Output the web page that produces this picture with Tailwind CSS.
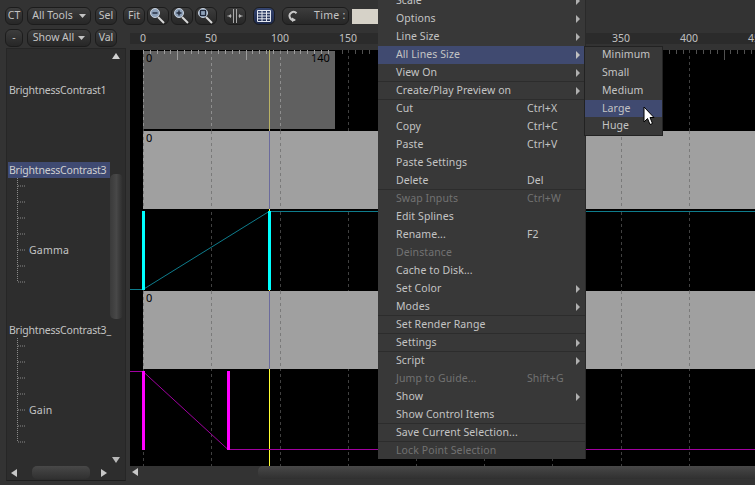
<!DOCTYPE html>
<html lang="en">
<head>
    <meta charset="UTF-8">
    <title>Timeline</title>
    <script src="https://cdn.jsdelivr.net/npm/@tailwindcss/browser@4"></script>
</head>
<body class="bg-[#333333]">
<div class="relative w-[755px] h-[485px] overflow-hidden bg-[#333333] text-[#c4c4c4] text-[10.5px] leading-none font-['Noto_Sans',sans-serif]">

    <!-- Top toolbar -->
    <div class="flex items-center h-[18px] mt-[7px] pl-[5px]">
        <div class="flex items-center justify-center w-[18px] h-[18px] pb-[1px] rounded-[6px] border border-[#1c1c1c] bg-linear-to-b from-[#3d3d3d] to-[#272727]">CT</div>
        <div class="flex items-center justify-center gap-[6px] ml-[4px] w-[64px] h-[18px] pb-[1px] rounded-[6px] border border-[#1c1c1c] bg-linear-to-b from-[#3d3d3d] to-[#272727]">All Tools
            <svg width="7" height="4" viewBox="0 0 7 4"><polygon points="0,0 7,0 3.5,4" fill="#c4c4c4"/></svg>
        </div>
        <div class="flex items-center justify-center ml-[4px] w-[22px] h-[18px] pb-[1px] rounded-[6px] border border-[#1c1c1c] bg-linear-to-b from-[#3d3d3d] to-[#272727]">Sel</div>
        <div class="flex items-center justify-center ml-[6px] w-[22px] h-[18px] pb-[1px] rounded-[6px] border border-[#1c1c1c] bg-linear-to-b from-[#3d3d3d] to-[#272727]">Fit</div>
        <div class="flex items-center justify-center ml-[2px] w-[22px] h-[18px] rounded-[6px] border border-[#1c1c1c] bg-linear-to-b from-[#3d3d3d] to-[#272727]">
            <svg width="20" height="16" viewBox="0 0 20 16"><line x1="10" y1="9" x2="16" y2="15" stroke="#d8d8d8" stroke-width="2"/><circle cx="7" cy="5" r="4.5" fill="#8da0b8" stroke="#c8d0dc"/><line x1="4.5" y1="5" x2="9.5" y2="5" stroke="#20283a" stroke-width="1.4"/></svg>
        </div>
        <div class="flex items-center justify-center ml-[2px] w-[22px] h-[18px] rounded-[6px] border border-[#1c1c1c] bg-linear-to-b from-[#3d3d3d] to-[#272727]">
            <svg width="20" height="16" viewBox="0 0 20 16"><line x1="10" y1="9" x2="16" y2="15" stroke="#d8d8d8" stroke-width="2"/><circle cx="7" cy="5" r="4.5" fill="#8da0b8" stroke="#c8d0dc"/><path d="M4.5 5H9.5M7 2.5V7.5" stroke="#20283a" stroke-width="1.4"/></svg>
        </div>
        <div class="flex items-center justify-center ml-[2px] w-[22px] h-[18px] rounded-[6px] border border-[#1c1c1c] bg-linear-to-b from-[#3d3d3d] to-[#272727]">
            <svg width="20" height="16" viewBox="0 0 20 16"><line x1="10" y1="9" x2="16" y2="15" stroke="#d8d8d8" stroke-width="2"/><circle cx="7" cy="5" r="4.5" fill="#8da0b8" stroke="#c8d0dc"/><rect x="4.5" y="2.5" width="5" height="5" fill="none" stroke="#20283a" stroke-width="1.2"/></svg>
        </div>
        <div class="flex items-center justify-center ml-[7px] w-[22px] h-[18px] rounded-[6px] border border-[#1c1c1c] bg-linear-to-b from-[#3d3d3d] to-[#272727]">
            <svg width="18" height="14" viewBox="0 0 18 14"><path d="M7.5 0V14M10.5 0V14" stroke="#a8a8a8"/><path d="M1 7H6M12 7H17" stroke="#777777"/><polygon points="2,7 5,5 5,9" fill="#b0b0b0"/><polygon points="16,7 13,5 13,9" fill="#b0b0b0"/></svg>
        </div>
        <div class="flex items-center justify-center ml-[7px] w-[22px] h-[18px] rounded-[6px] border border-[#1c1c1c] bg-linear-to-b from-[#34446f] to-[#1f2b4e]">
            <svg width="14" height="12" viewBox="0 0 14 12"><path d="M.5 .5H13.5V11.5H.5ZM.5 3.2H13.5M.5 6H13.5M.5 8.8H13.5M5 .5V11.5M9.5 .5V11.5" fill="none" stroke="#e4e8f0"/></svg>
        </div>
        <div class="flex items-center ml-[7px] w-[67px] h-[18px] rounded-[6px] border border-[#1c1c1c] bg-linear-to-b from-[#3d3d3d] to-[#272727]">
            <svg class="ml-[4px]" width="12" height="12" viewBox="0 0 12 12"><path d="M9.5 3.2A4 4 0 1 0 7.5 9.8" fill="none" stroke="#c8c8c8" stroke-width="2"/><polygon points="5,7.5 9,10 5,12" fill="#c8c8c8"/></svg>
            <span class="ml-[15px] mb-[1px] tracking-[0.3px]">Time :</span>
        </div>
        <div class="ml-[3px] w-[26px] h-[15px] bg-[#d6d2c8]"></div>
    </div>

    <div class="flex mt-[4px]">
        <!-- Left column: second toolbar row and the tool list -->
        <div class="w-[130px] shrink-0">
            <div class="flex items-center h-[18px] pl-[5px]">
                <div class="flex items-center justify-center w-[18px] h-[18px] pb-[1px] rounded-[6px] border border-[#1c1c1c] bg-linear-to-b from-[#3d3d3d] to-[#272727]">-</div>
                <div class="flex items-center justify-center gap-[4px] ml-[4px] w-[64px] h-[18px] pb-[1px] rounded-[6px] border border-[#1c1c1c] bg-linear-to-b from-[#3d3d3d] to-[#272727]">Show All
                    <svg width="7" height="4" viewBox="0 0 7 4"><polygon points="0,0 7,0 3.5,4" fill="#c4c4c4"/></svg>
                </div>
                <div class="flex items-center justify-center ml-[4px] w-[22px] h-[18px] pb-[1px] rounded-[6px] border border-[#1c1c1c] bg-linear-to-b from-[#3d3d3d] to-[#272727]">Val</div>
            </div>

            <div class="relative ml-[6px] mt-[1px] w-[120px] h-[433px] bg-[#2d2d2d] border border-[#262626] border-b-[#1e1e1e]">
                <div class="flex flex-col pt-[1px] tracking-[-0.2px]">
                    <div class="flex items-center h-[80px] pl-[2px]">BrightnessContrast1</div>
                    <div class="flex items-center h-[80px] pl-[1px]"><span class="flex items-center w-[102px] h-[16px] pl-[1px] bg-[#3f4a72] text-[#d0d0d0]">BrightnessContrast3</span></div>
                    <div class="flex items-center h-[80px] pl-[22px] tracking-[0.2px]">Gamma</div>
                    <div class="flex items-center h-[80px] pl-[2px] whitespace-nowrap">BrightnessContrast3_</div>
                    <div class="flex items-center h-[80px] pl-[22px] tracking-[0.2px]">Gain</div>
                </div>

                <!-- tree branches -->
                <svg class="absolute left-0 top-0" width="118" height="431" viewBox="7 49 118 431">
                    <g fill="none" stroke="#8a8a8a" stroke-dasharray="1 1">
                        <path d="M17.500 178V282M18 186H26M18 202H26M18 218H26M18 234H26M18 250H26M18 266H26M18 282H26"/>
                        <path d="M17.500 338V442M18 346H26M18 362H26M18 378H26M18 394H26M18 410H26M18 426H26M18 442H26"/>
                    </g>
                </svg>

                <!-- list scrollbars -->
                <svg class="absolute right-[5px] top-[4px]" width="8" height="6" viewBox="0 0 8 6"><polygon points="4,0 8,6 0,6" fill="#d0d0d0"/></svg>
                <svg class="absolute right-[5px] top-[408px]" width="8" height="6" viewBox="0 0 8 6"><polygon points="0,0 8,0 4,6" fill="#b8b8b8"/></svg>
                <div class="absolute left-[103px] top-[125px] w-[13px] h-[145px] rounded-[5px] bg-linear-to-r from-[#3a3a3a] via-[#484848] to-[#2c2c2c]"></div>
                <svg class="absolute left-[4px] top-[420px]" width="6" height="8" viewBox="0 0 6 8"><polygon points="0,4 6,0 6,8" fill="#c8c8c8"/></svg>
                <div class="absolute left-[25px] top-[417px] w-[58px] h-[13px] rounded-[5px] bg-linear-to-b from-[#484848] to-[#303030]"></div>
                <svg class="absolute left-[94px] top-[420px]" width="6" height="8" viewBox="0 0 6 8"><polygon points="6,4 0,0 0,8" fill="#c8c8c8"/></svg>
            </div>
        </div>

        <!-- Right column: ruler, timeline, scrollbar -->
        <div class="flex-1 min-w-0">
            <div class="relative h-[11px] mt-[4px] bg-[#2b2b2b] text-[#c0c0c0]">
                <span class="absolute left-[13px] top-0 -translate-x-1/2">0</span>
                <span class="absolute left-[81px] top-0 -translate-x-1/2">50</span>
                <span class="absolute left-[150px] top-0 -translate-x-1/2">100</span>
                <span class="absolute left-[218px] top-0 -translate-x-1/2">150</span>
                <span class="absolute left-[491px] top-0 -translate-x-1/2">350</span>
                <span class="absolute left-[559px] top-0 -translate-x-1/2">400</span>
                <span class="absolute left-[618px] top-0">450</span>
            </div>

            <!-- page coordinates are kept in the viewBox -->
            <svg class="block mt-[6px]" width="625" height="416" viewBox="130 50 625 416" shape-rendering="crispEdges">
                <rect x="130" y="50" width="625" height="416" fill="#000000"/>
                <g stroke="#404040" stroke-dasharray="3 3">
                    <path d="M143.500 50V466M211.500 50V466M280.500 50V466M348.500 50V466M416.500 50V466M484.500 50V466M552.500 50V466M621.500 50V466M689.500 50V466"/>
                </g>
                <rect x="143" y="51" width="192" height="78" fill="#606060"/>
                <rect x="143" y="131" width="612" height="78" fill="#a0a0a0"/>
                <rect x="143" y="291" width="612" height="78" fill="#a0a0a0"/>
                <g stroke="#8e8e8e" stroke-dasharray="3 3">
                    <path d="M143.500 51V129M211.500 51V129M280.500 51V129"/>
                </g>
                <g stroke="#7a7a7a" stroke-dasharray="3 3">
                    <path d="M143.500 131V209M211.500 131V209M280.500 131V209M621.500 131V209M689.500 131V209"/>
                    <path d="M143.500 291V369M211.500 291V369M280.500 291V369M621.500 291V369M689.500 291V369"/>
                </g>
                <path d="M143.500 54V50M150.500 54V50M157.500 54V50M164.500 54V50M170.500 54V50M177.500 60V50M184.500 54V50M191.500 54V50M198.500 54V50M205.500 54V50M218.500 54V50M225.500 54V50M232.500 54V50M239.500 54V50M246.500 60V50M252.500 54V50M259.500 54V50M266.500 54V50M273.500 54V50M287.500 54V50M294.500 54V50M300.500 54V50M307.500 54V50M314.500 60V50M321.500 54V50M328.500 54V50" stroke="#9c9c9c" fill="none"/>
                <path d="M342.500 54V50M355.500 54V50M362.500 54V50M369.500 54V50M628.500 54V50M635.500 54V50M642.500 54V50M649.500 54V50M655.500 60V50M662.500 54V50M669.500 54V50M676.500 54V50M683.500 54V50M696.500 54V50M703.500 54V50M710.500 54V50M717.500 54V50M724.500 60V50M730.500 54V50M737.500 54V50M744.500 54V50M751.500 54V50" stroke="#505050" fill="none"/>

                <!-- playhead -->
                <line x1="269.500" y1="50" x2="269.500" y2="131" stroke="#b9b264"/>
                <line x1="269.500" y1="131" x2="269.500" y2="209" stroke="#6a6a9c"/>
                <line x1="269.500" y1="209" x2="269.500" y2="291" stroke="#ffff33"/>
                <line x1="269.500" y1="291" x2="269.500" y2="369" stroke="#6a6a9c"/>
                <line x1="269.500" y1="369" x2="269.500" y2="466" stroke="#ffff33"/>

                <!-- Gamma curve -->
                <rect x="130" y="289" width="13" height="1" fill="#0e7c8c"/>
                <rect x="269" y="211" width="486" height="1" fill="#0e7c8c"/>
                <line x1="143" y1="289.500" x2="269" y2="211.500" stroke="#0e7c8c" shape-rendering="auto"/>
                <rect x="142" y="211" width="3" height="79" fill="#00ffff"/>
                <rect x="268" y="211" width="3" height="79" fill="#00ffff"/>
                <!-- Gain curve -->
                <rect x="130" y="371" width="13" height="1" fill="#a000a0"/>
                <rect x="228" y="449" width="527" height="1" fill="#a000a0"/>
                <line x1="143" y1="371.500" x2="228" y2="449.500" stroke="#a000a0" shape-rendering="auto"/>
                <rect x="142" y="371" width="3" height="79" fill="#ff00ff"/>
                <rect x="227" y="371" width="3" height="79" fill="#ff00ff"/>

                <text x="146" y="62" font-size="11" fill="#000000">0</text>
                <text x="311" y="62" font-size="11" fill="#000000">140</text>
                <text x="146" y="142" font-size="11" fill="#000000">0</text>
                <text x="146" y="302" font-size="11" fill="#000000">0</text>
            </svg>

            <div class="relative h-[13px]">
                <svg class="absolute left-[2px] top-[2px]" width="6" height="8" viewBox="0 0 6 8"><polygon points="0,4 6,0 6,8" fill="#c8c8c8"/></svg>
                <div class="absolute left-[128px] right-0 top-0 h-[13px] rounded-l-[5px] bg-linear-to-b from-[#484848] to-[#303030]"></div>
            </div>
        </div>
    </div>

    <!-- Context menu -->
    <div class="absolute left-[378px] top-[-8px] w-[208px] flex flex-col bg-[#383838] border-r border-[#2a2a2a] tracking-[0.1px] [&>div]:pb-[1px]">
        <div class="relative flex items-center h-[18px] pl-[18px]">Scale<svg class="absolute left-[198px] top-[5px]" width="4" height="8" viewBox="0 0 4 8"><polygon points="0,0 4,4 0,8" fill="#b0b0b0"/></svg></div>
        <div class="relative flex items-center h-[18px] pl-[18px]">Options<svg class="absolute left-[198px] top-[5px]" width="4" height="8" viewBox="0 0 4 8"><polygon points="0,0 4,4 0,8" fill="#b0b0b0"/></svg></div>
        <div class="relative flex items-center h-[18px] pl-[18px]">Line Size<svg class="absolute left-[198px] top-[5px]" width="4" height="8" viewBox="0 0 4 8"><polygon points="0,0 4,4 0,8" fill="#b0b0b0"/></svg></div>
        <div class="relative flex items-center h-[18px] pl-[18px] bg-[#404a70]">All Lines Size<svg class="absolute left-[198px] top-[5px]" width="4" height="8" viewBox="0 0 4 8"><polygon points="0,0 4,4 0,8" fill="#c0c0c0"/></svg></div>
        <div class="relative flex items-center h-[18px] pl-[18px] border-b border-[#2c2c2c]">View On<svg class="absolute left-[198px] top-[5px]" width="4" height="8" viewBox="0 0 4 8"><polygon points="0,0 4,4 0,8" fill="#b0b0b0"/></svg></div>
        <div class="relative flex items-center h-[18px] pl-[18px] border-b border-[#2c2c2c]">Create/Play Preview on<svg class="absolute left-[198px] top-[5px]" width="4" height="8" viewBox="0 0 4 8"><polygon points="0,0 4,4 0,8" fill="#b0b0b0"/></svg></div>
        <div class="flex items-center justify-between h-[18px] pl-[18px]"><span>Cut</span><span class="w-[58px]">Ctrl+X</span></div>
        <div class="flex items-center justify-between h-[18px] pl-[18px]"><span>Copy</span><span class="w-[58px]">Ctrl+C</span></div>
        <div class="flex items-center justify-between h-[18px] pl-[18px]"><span>Paste</span><span class="w-[58px]">Ctrl+V</span></div>
        <div class="flex items-center h-[18px] pl-[18px]">Paste Settings</div>
        <div class="flex items-center justify-between h-[18px] pl-[18px] border-b border-[#2c2c2c]"><span>Delete</span><span class="w-[58px]">Del</span></div>
        <div class="flex items-center justify-between h-[18px] pl-[18px] text-[#727272]"><span>Swap Inputs</span><span class="w-[58px]">Ctrl+W</span></div>
        <div class="flex items-center h-[18px] pl-[18px]">Edit Splines</div>
        <div class="flex items-center justify-between h-[18px] pl-[18px]"><span>Rename...</span><span class="w-[58px]">F2</span></div>
        <div class="flex items-center h-[18px] pl-[18px] text-[#727272]">Deinstance</div>
        <div class="flex items-center h-[18px] pl-[18px]">Cache to Disk...</div>
        <div class="relative flex items-center h-[18px] pl-[18px]">Set Color<svg class="absolute left-[198px] top-[5px]" width="4" height="8" viewBox="0 0 4 8"><polygon points="0,0 4,4 0,8" fill="#b0b0b0"/></svg></div>
        <div class="relative flex items-center h-[18px] pl-[18px] border-b border-[#2c2c2c]">Modes<svg class="absolute left-[198px] top-[5px]" width="4" height="8" viewBox="0 0 4 8"><polygon points="0,0 4,4 0,8" fill="#b0b0b0"/></svg></div>
        <div class="flex items-center h-[18px] pl-[18px] border-b border-[#2c2c2c]">Set Render Range</div>
        <div class="relative flex items-center h-[18px] pl-[18px] border-b border-[#2c2c2c]">Settings<svg class="absolute left-[198px] top-[5px]" width="4" height="8" viewBox="0 0 4 8"><polygon points="0,0 4,4 0,8" fill="#b0b0b0"/></svg></div>
        <div class="relative flex items-center h-[18px] pl-[18px]">Script<svg class="absolute left-[198px] top-[5px]" width="4" height="8" viewBox="0 0 4 8"><polygon points="0,0 4,4 0,8" fill="#b0b0b0"/></svg></div>
        <div class="flex items-center justify-between h-[18px] pl-[18px] text-[#727272]"><span>Jump to Guide...</span><span class="w-[58px]">Shift+G</span></div>
        <div class="relative flex items-center h-[18px] pl-[18px]">Show<svg class="absolute left-[198px] top-[5px]" width="4" height="8" viewBox="0 0 4 8"><polygon points="0,0 4,4 0,8" fill="#b0b0b0"/></svg></div>
        <div class="flex items-center h-[18px] pl-[18px] border-b border-[#2c2c2c]">Show Control Items</div>
        <div class="flex items-center h-[18px] pl-[18px] border-b border-[#2c2c2c]">Save Current Selection...</div>
        <div class="flex items-center h-[17px] pl-[18px] text-[#727272]">Lock Point Selection</div>
    </div>

    <!-- All Lines Size submenu -->
    <div class="absolute left-[584px] top-[46px] w-[79px] flex flex-col bg-[#383838] border border-[#222222] tracking-[0.1px]">
        <div class="flex items-center h-[17px] pb-[2px] pl-[17px]">Minimum</div>
        <div class="flex items-center h-[18px] pb-[1px] pl-[17px]">Small</div>
        <div class="flex items-center h-[18px] pb-[1px] pl-[17px]">Medium</div>
        <div class="flex items-center h-[17px] pl-[17px] pb-[1px] bg-[#404a70]">Large</div>
        <div class="flex items-center h-[18px] pb-[1px] pl-[17px]">Huge</div>
    </div>

    <!-- mouse cursor -->
    <svg class="absolute left-[643px] top-[106px]" width="12" height="20" viewBox="0 0 12 20"><polygon points="1,1 1,16 4.500,12.500 7,18.500 9.500,17.500 7,11.500 11,11.500" fill="#ffffff" stroke="#000000"/></svg>
</div>
</body>
</html>
